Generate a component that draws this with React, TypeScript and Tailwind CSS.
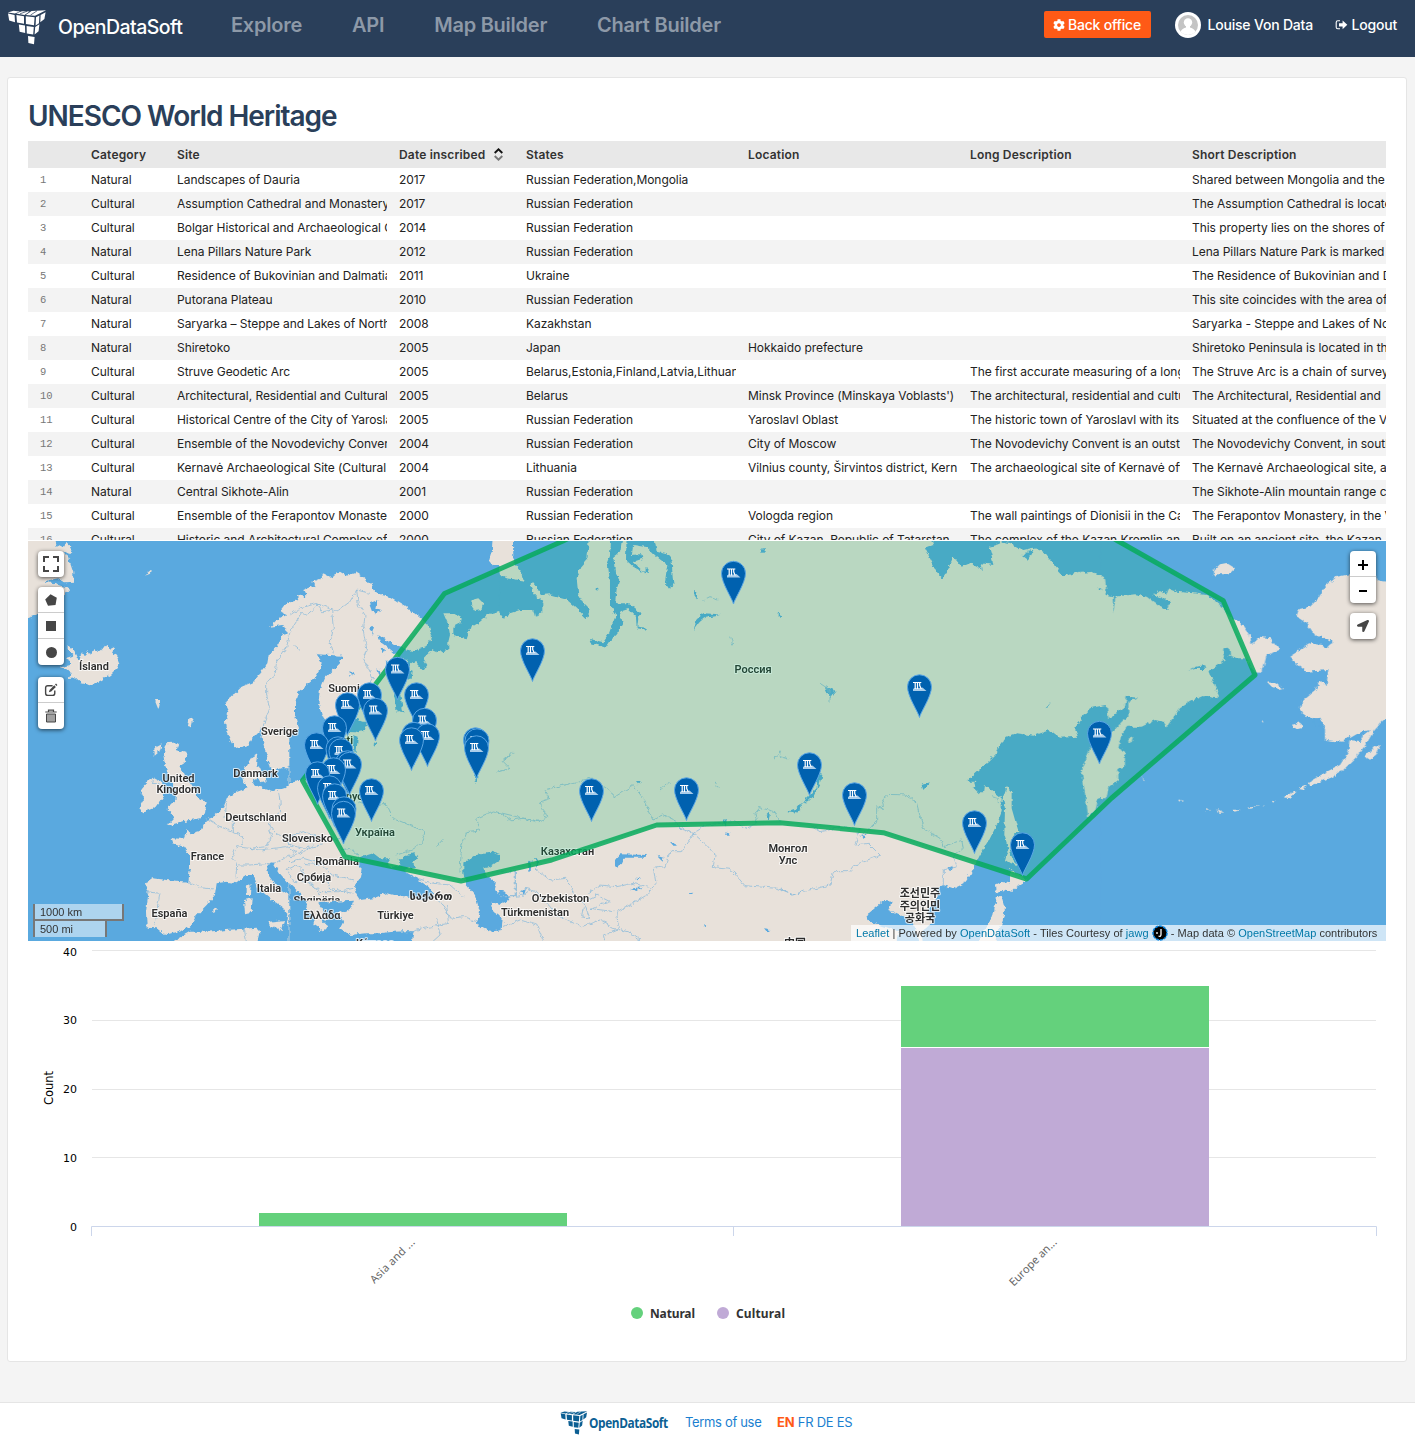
import { FaCog, FaLocationArrow } from "react-icons/fa";

const FACES = "M1 3.2 7.6 4.6 8 11.6 2.2 10z M9.4 4.8 17 5.8 17 13 10 11.9z M18.8 6 27.6 6.8 27 14.4 18.9 13.3z M29 6.8 32.4 5.2 32 12.4 28.6 14.6z M33.6 4.6 38.6 2.2 37.4 8.6 33.3 11.6z M11.8 13.6 18 14.6 18.2 21.6 12.6 20.4z M19.6 15 26.8 16 26.2 23.2 19.8 22.2z M28.2 16 32.4 13.4 31.6 20 27.6 23z M21 24.6 27.6 25.4 27 32.2 21.4 31z";
const TOPS = "M.8 2.4 6.5.8 13 1.4 7.8 3.4z M9.2 3.4 15 1.2 22.6 1.4 17.4 4.6z M18.8 4.6 24.6 1 39 .2 28 5.4z";

function Cubes({ color, w, h }: { color: string; w: number; h: number }) {
  return (
    <svg width={w} height={h} viewBox="0 0 40 33" preserveAspectRatio="none" fill={color} className="shrink-0">
      <path d={FACES} />
      <path d={TOPS} />
      <path d="M13 3.6 20 1.2M23.5 4.8 30 .8" stroke={color === "#fff" ? "#2a3f5a" : "#fff"} strokeWidth=".7" />
    </svg>
  );
}

function LogoutIcon() {
  return (
    <svg width="13" height="12" viewBox="0 0 13 12" className="shrink-0">
      <path d="M5 1.800H2.800Q1.200 1.800 1.200 3.400V8.200Q1.200 9.800 2.800 9.800H5" fill="none" stroke="#fff" strokeWidth="1.100" />
      <path d="M4 4.200H7.600V1.400L12.300 5.800 7.600 10.200V7.500H4z" fill="#fff" />
    </svg>
  );
}

function Header() {
  return (
    <header className="flex h-[57px] items-center bg-[#2a3f5a] pl-[7px] pr-[18px] text-white">
      <div className="flex items-center pb-[3px]">
        <Cubes color="#fff" w={40} h={35} />
        <span className="ml-[11px] mt-[1px] w-[173px] text-[19.5px] font-medium tracking-[-0.55px]">OpenDataSoft</span>
      </div>
      <nav className="mb-[7px] flex flex-1 gap-[50px] text-[20px] font-semibold tracking-[-0.25px] text-[#8d99a8]">
        <span>Explore</span>
        <span>API</span>
        <span>Map Builder</span>
        <span>Chart Builder</span>
      </nav>
      <div className="mb-[8px] flex items-center text-[14px] font-medium tracking-[-0.2px]">
        <span className="flex h-[27px] w-[107px] items-center justify-center gap-[3px] whitespace-nowrap rounded-[2px] bg-[#ff5a16]">
          <FaCog size={12} />
          Back office
        </span>
        <svg width="26" height="26" viewBox="0 0 26 26" className="ml-6">
          <circle cx="13" cy="13" r="13" fill="#fff" />
          <circle cx="13" cy="13" r="10" fill="#c4c4c4" />
          <circle cx="13" cy="10.500" r="4.200" fill="#fff" />
          <path d="M5.500 20Q6.500 16.500 11 15.500V13H15V15.500Q19.500 16.500 20.500 20Q13 26 5.500 20z" fill="#fff" />
        </svg>
        <span className="ml-[7px] w-[127px] whitespace-nowrap">Louise Von Data</span>
        <LogoutIcon />
        <span className="ml-1">Logout</span>
      </div>
    </header>
  );
}

const RF = "Russian Federation";
const ROWS: string[][] = [
  ["Natural", "Landscapes of Dauria", "2017", "Russian Federation,Mongolia", "", "", "Shared between Mongolia and the"],
  ["Cultural", "Assumption Cathedral and Monastery", "2017", RF, "", "", "The Assumption Cathedral is located"],
  ["Cultural", "Bolgar Historical and Archaeological Complex", "2014", RF, "", "", "This property lies on the shores of"],
  ["Natural", "Lena Pillars Nature Park", "2012", RF, "", "", "Lena Pillars Nature Park is marked"],
  ["Cultural", "Residence of Bukovinian and Dalmatian", "2011", "Ukraine", "", "", "The Residence of Bukovinian and Dalmatian"],
  ["Natural", "Putorana Plateau", "2010", RF, "", "", "This site coincides with the area of"],
  ["Natural", "Saryarka – Steppe and Lakes of Northern", "2008", "Kazakhstan", "", "", "Saryarka - Steppe and Lakes of Northern"],
  ["Natural", "Shiretoko", "2005", "Japan", "Hokkaido prefecture", "", "Shiretoko Peninsula is located in the"],
  ["Cultural", "Struve Geodetic Arc", "2005", "Belarus,Estonia,Finland,Latvia,Lithuania", "", "The first accurate measuring of a long", "The Struve Arc is a chain of survey"],
  ["Cultural", "Architectural, Residential and Cultural", "2005", "Belarus", "Minsk Province (Minskaya Voblasts')", "The architectural, residential and cultural", "The Architectural, Residential and"],
  ["Cultural", "Historical Centre of the City of Yaroslavl", "2005", RF, "Yaroslavl Oblast", "The historic town of Yaroslavl with its", "Situated at the confluence of the Volga"],
  ["Cultural", "Ensemble of the Novodevichy Convent", "2004", RF, "City of Moscow", "The Novodevichy Convent is an outstanding", "The Novodevichy Convent, in south"],
  ["Cultural", "Kernavė Archaeological Site (Cultural", "2004", "Lithuania", "Vilnius county, Širvintos district, Kern", "The archaeological site of Kernavė offers", "The Kernavė Archaeological site, about"],
  ["Natural", "Central Sikhote-Alin", "2001", RF, "", "", "The Sikhote-Alin mountain range contains"],
  ["Cultural", "Ensemble of the Ferapontov Monaste", "2000", RF, "Vologda region", "The wall paintings of Dionisii in the Cathedral", "The Ferapontov Monastery, in the Vologda"],
  ["Cultural", "Historic and Architectural Complex of", "2000", RF, "City of Kazan, Republic of Tatarstan", "The complex of the Kazan Kremlin and", "Built on an ancient site, the Kazan"],
];
const COLS = "grid grid-cols-[51px_74px_210px_115px_210px_210px_210px_210px] gap-x-3 whitespace-nowrap";

function Table() {
  return (
    <div className="h-[399px] overflow-hidden text-[12px] tracking-[-0.05px] text-[#222]">
      <div className={`${COLS} h-[27px] items-center bg-[#e8e8e8] font-semibold tracking-[0.18px] text-[#333]`}>
        <span />
        <span>Category</span>
        <span>Site</span>
        <span className="flex items-center gap-[9px]">
          Date inscribed
          <svg width="9" height="13" viewBox="0 0 9 13" fill="none" strokeWidth="1.900">
            <path d="M.7 5 4.500 1.300 8.300 5" stroke="#111" />
            <path d="M.7 8 4.500 11.700 8.300 8" stroke="#777" />
          </svg>
        </span>
        <span>States</span>
        <span>Location</span>
        <span>Long Description</span>
        <span>Short Description</span>
      </div>
      {ROWS.map((r, i) => (
        <div key={i} className={`${COLS} h-6 items-center odd:bg-[#f3f3f3]`}>
          <span className="pl-[12px] pt-px font-['Liberation_Mono'] text-[10.5px] text-[#777]">{i + 1}</span>
          {r.map((c, j) => (
            <span key={j} className="overflow-hidden">{c}</span>
          ))}
        </div>
      ))}
    </div>
  );
}

const LAND = "#e8e1da";
const SEA = "#5aa9df";

// Coastlines are stored at three units per pixel, in strips that run west to east.
const LAND_WEST = [
  "-20,-10 100,-10 110,30 130,40 140,20 158,50 150,58 130,48 150,80 160,110 160,140 135,142 115,130 90,135 75,140 100,145 150,162 135,180 100,185 70,200 60,235 24,250 -20,255",
  "122,398 150,390 150,378 135,370 160,362 140,345 140,332 158,338 170,360 178,378 186,348 195,365 205,345 213,360 222,342 235,352 245,345 258,328 268,342 282,335 278,350 292,368 298,385 290,400 270,420 240,438 210,451 185,445 170,430 145,432 155,415 140,400",
  "900,155 880,152 850,165 860,185 830,180 835,195 800,205 780,230 800,240 770,255 750,275 790,270 800,290 785,310 770,335 750,355 745,385 725,410 700,440 665,455 650,470 625,490 615,510 625,530 615,560 620,590 635,625 655,640 685,630 700,605 715,590 724,580 725,610 740,660 750,700 760,715 780,700 805,700 812,660 818,625 845,600 852,575 840,555 825,540 825,500 835,470 860,450 885,430 905,405",
  "440,625 478,622 470,645 500,655 495,680 480,690 495,720 520,760 540,795 560,800 555,835 540,850 490,858 470,865 440,872 465,845 440,820 465,800 470,770 445,720 435,690 430,660",
  "365,760 395,725 430,745 428,790 410,815 370,832 358,820 372,795 362,775",
  "675,700 695,665 712,655 708,690 725,700 700,740 700,750 735,760 760,768 800,755 850,735 912,728 912,1155 890,1170 870,1150 862,1110 850,1090 810,1050 775,1010 760,985 740,990 745,1020 770,1055 815,1085 848,1112 818,1118 828,1140 815,1165 800,1165 805,1140 790,1120 750,1090 715,1060 700,1020 680,1020 650,1045 620,1040 590,1045 585,1080 560,1110 530,1140 510,1175 470,1190 435,1200 410,1180 380,1178 378,1130 385,1080 375,1048 400,1030 440,1035 505,1040 510,1000 510,965 490,935 460,925 455,910 490,912 500,885 512,898 540,890 555,860 570,850 610,820 620,790 640,775 680,760 670,730",
  "430,1235 510,1190 560,1190 620,1185 710,1178 718,1195 708,1235",
  "680,1055 692,1048 690,1080 680,1080", "672,1095 698,1090 695,1130 675,1135", "745,1160 795,1155 785,1188 750,1172",
  "572,1132 585,1118 592,1126", "375,122 395,106 394,115", "405,495 422,495 416,522", "503,578 508,550 518,548 512,575", "403,640 425,628 418,650 404,662",
  "840,665 850,645 858,655 845,672", "808,700 820,665 818,690", "712,722 735,718 740,740 722,745", "860,568 878,560 878,575",
];
const LAND_B = [
  "-4,240 10,215 40,195 50,170 80,160 70,140 95,130 100,115 120,125 150,110 170,122 200,112 245,145 250,165 275,180 300,185 340,210 380,240 415,270 426,300 410,335 370,348 320,335 265,300 270,320 300,342 330,368 355,372 352,395 375,380 400,408 412,390 400,370 425,345 440,352 475,345 475,320 480,300 475,270 460,235 490,235 515,250 510,265 490,275 490,300 530,310 540,280 570,260 600,235 640,225 640,1235 -4,1235",
];
const ISLANDS_B = ["610,-10 605,50 598,75 610,90 625,90 630,120 650,130 700,137 700,120 675,90 668,60 668,-10", "545,195 565,190 580,205 575,225 555,228 543,210", "722,145 740,155 752,190 728,170"];
const WATER_B = [
  "-2,600 25,590 20,560 15,540 15,500 25,470 50,450 75,430 90,405 95,380 80,358 155,362 150,385 125,410 105,430 90,465 85,500 95,540 110,560 200,552 235,570 200,592 140,590 110,600 120,640 90,650 80,630 70,680 60,710 35,735 -2,745",
  "200,1080 195,1050 210,1030 215,1000 200,990 215,965 250,955 270,970 300,970 290,985 310,1000 335,990 325,975 350,960 370,955 385,965 370,985 375,1000 350,1000 345,1010 380,1030 420,1060 432,1085 400,1095 370,1090 330,1085 290,1075 250,1090 210,1095",
  "520,1015 520,985 545,970 570,955 600,950 630,960 630,975 600,995 580,1000 590,1020 620,1045 615,1065 640,1090 630,1110 605,1100 610,1130 638,1150 635,1185 600,1190 570,1175 560,1160 570,1130 555,1080 530,1050",
  "-2,1045 30,1075 50,1095 50,1120 75,1150 70,1170 100,1190 110,1170 90,1150 115,1155 100,1125 85,1105 130,1100 195,1097 185,1120 145,1135 160,1160 150,1180 180,1200 230,1195 270,1195 310,1190 370,1188 365,1235 -2,1235",
  "310,460 330,470 340,535 320,530", "340,400 368,410 365,435 345,425", "185,560 230,560 225,585 185,590", "187,600 203,605 200,650 190,650",
  "240,205 262,195 256,218 276,226 252,238", "178,408 196,418 182,422", "238,280 252,275 246,300", "275,340 288,345 280,358", "248,625 258,618 258,635", "552,720 562,720 560,745", "262,400 275,410 270,425", "290,375 300,385 296,400",
];
const WATER_C = [
  "0,100 40,60 38,-10 268,-10 262,70 240,95 230,130 235,180 255,210 270,225 260,250 225,215 195,190 150,178 125,180 100,145 90,150 105,180 130,200 130,230 105,245 100,225 60,225 30,235 10,250 -2,232",
  "335,-10 372,-10 365,45 340,65 345,110 358,135 350,160 345,205 380,205 405,215 425,240 415,250 412,275 440,278 440,284 410,280 408,245 385,222 360,230 368,265 350,295 330,320 318,338 275,325 270,312 310,322 325,300 340,260 348,240 330,205 330,140 325,100 318,90 330,60",
  "380,-10 460,-10 470,50 500,58 515,75 518,130 521,150 508,160 495,140 502,90 470,65 440,36 400,30 395,60 420,58 425,72 400,80 430,110 445,95 440,118 400,95 378,75",
  "784,40 797,40 797,50 784,50", "582,165 592,170 590,190 584,182", "582,285 590,250 610,235 660,238 618,245 600,260", "290,160 296,164 290,167",
  "345,975 360,958 440,960 440,968 370,968 355,1000 345,990", "-4,1065 15,1070 28,1095 5,1104", "85,985 95,975 92,1010 85,1010", "105,965 115,980 110,1005", "390,1062 425,1056 410,1068", "470,962 490,968 488,980", "508,918 535,932 520,932", "405,1028 425,1030 410,1033", "565,1072 580,1070 572,1078", "675,892 692,896 680,900", "860,830 885,825 905,800 905,820 885,835", "792,1180 808,1182 802,1192", "800,840 810,830 806,860", "408,738 422,738 416,748", "838,238 844,242 838,245", "612,1168 625,1172 614,1174", "668,855 680,852 678,875", "65,1070 78,1062 72,1080",
];
const WATER_D = [
  "435,40 460,30 445,-10 670,-10 655,28 628,35 635,60 640,90 605,85 608,105 570,85 545,95 520,65 505,100 488,130 470,110 460,90",
  "665,-10 962,-10 962,115 915,108 880,115 850,125 830,100 810,75 790,50 760,38 730,45 690,24 665,20",
  "725,60 745,58 735,48 760,45 745,75",
  "560,740 580,720 625,680 650,655 655,640 680,605 710,595 760,602 810,585 840,608 895,605 885,580 910,545 930,520 962,510 962,1240 430,1240 425,1190 460,1160 440,1130 470,1090 470,1060 490,1050 520,1060 550,1045 570,1020 600,960 625,920 650,870 665,830 665,790 640,770 615,750 612,775 600,775 580,755 590,740",
  "260,1140 310,1098 335,1100 325,1125 345,1135 400,1160 420,1240 340,1240 360,1190 300,1170 262,1158",
  "22,830 55,822 80,790 110,760 112,715 125,715 120,745 100,785 65,810 45,835", "425,750 450,742 430,765", "500,998 518,992 510,1012", "135,455 150,460 168,468 150,490", "797,520 814,500 802,518", "245,905 260,895 255,910", "-4,236 4,240 -4,246",
];
const LAND_D = [
  "680,755 695,770 695,820 715,890 700,900 690,960 700,975 712,990 690,985 675,975 685,940 673,900 675,820 668,790",
  "645,1050 665,1040 690,1045 690,998 715,1020 745,1035 710,1055 695,1070 665,1065 648,1078",
  "650,1090 665,1085 675,1120 670,1150 655,1190 640,1235 590,1235 620,1170 640,1140",
];
const LAND_E = [
  "-10,115 40,110 75,130 80,180 105,185 165,178 200,185 220,200 250,222 265,222 270,200 240,185 220,178 240,168 260,180 265,160 290,170 340,175 380,180 420,210 450,245 490,270 510,300 515,330 540,305 570,310 598,345 560,360 550,400 530,418 495,370 475,370 450,362 448,338 430,340 430,360 435,375 385,410 400,440 415,480 405,490 375,480 330,500 300,520 260,575 250,560 225,555 185,575 145,575 125,600 115,640 135,650 135,695 115,700 115,735 85,760 80,790 55,790 45,830 25,845 10,740 5,710 20,670 30,640 65,620 100,590 125,560 145,545 145,500 172,488 140,485 135,515 85,550 80,510 50,515 30,520 0,550 -10,560",
  "940,145 895,140 885,115 810,118 770,125 735,155 715,190 690,215 658,222 650,245 680,265 705,300 755,320 740,340 725,330 690,325 660,345 628,365 655,390 680,410 745,405 740,450 720,440 705,465 675,490 660,520 680,550 720,545 735,580 735,615 785,620 810,600 805,650 780,690 740,710 685,742 690,752 750,728 790,705 830,665 860,625 880,590 905,560 940,540",
  "402,105 420,88 440,84 465,100 450,115 420,115 402,122", "562,442 590,445 612,462 600,465 575,455", "638,570 655,562 670,575 650,580", "855,665 885,630 902,632 885,665 865,675",
  "655,762 680,750 672,765", "612,786 640,770 650,770 625,790", "455,824 485,824 460,830", "505,818 540,812 510,822", "182,722 190,740 194,742", "295,793 310,798 302,800", "542,555 552,562 545,562", "548,812 556,812 552,816", "575,802 586,798 580,806", "145,612 160,602 155,618 145,622", "380,822 390,826 382,828", "412,822 430,832 418,834",
];
const WATER_E = ["325,408 350,395 375,390 378,402 345,402", "800,615 840,592 870,585 850,600 842,618", "700,545 705,570 722,572 715,550", "54,160 66,160 66,166 54,166", "98,185 106,188 100,235", "705,312 730,305 760,322 740,335"];

const LINES: [number, string[]][] = [
  [0, ["900,205 860,240 845,235 810,290 800,335 770,380 765,420 740,440 740,480 748,520 735,560 725,580", "820,330 840,346", "775,768 780,800 782,830 745,860 755,880 790,910 850,890 905,905", "745,860 755,905 740,935 690,940 650,935 635,970 650,985 648,1030", "560,850 600,875 640,890 668,905 665,930", "620,800 615,850 640,860 640,890", "505,1042 540,1058 580,1062", "380,1070 420,1075 410,1130 405,1170", "690,940 720,945 760,940 800,935 830,950 800,965 770,985", "750,985 690,990 655,990", "800,1005 830,990 850,1000 848,1040 820,1040 805,1010", "850,985 905,990", "672,1178 680,1222", "395,730 405,745 420,748", "790,910 810,930 850,940 905,930", "850,1040 880,1050 900,1080"]],
  [810, ["0,240 30,220 80,205 100,230 125,225 130,280 120,320 130,355", "80,205 140,230 180,200 200,165 240,175", "200,165 205,210 225,240 220,290 230,340 220,370 250,430 220,480", "205,800 250,812 290,808 310,850 370,875 405,890 395,925 365,945 320,960", "0,900 40,915 80,900 110,920 150,910", "0,980 40,970 90,985 130,1020 190,1035", "80,900 60,940 20,960 0,965", "150,945 180,940 210,965", "110,1030 120,1060 190,1075", "30,1000 60,1040 90,1070 140,1070 190,1060", "510,1010 515,930 530,890 570,885 560,850 610,828 680,845 750,860", "620,712 660,700 640,680 665,650", "440,935 460,912", "380,1030 430,1045 480,1050 520,1085", "430,1085 460,1110 480,1150 520,1145 560,1160", "470,1110 475,1165 400,1180 350,1195", "440,1150 450,1200 430,1218", "676,1005 676,1085 640,1085", "676,1085 700,1080 720,1065", "250,540 240,500 260,460"]],
  [1440, ["0,835 30,855 70,850 110,860 140,850 120,800 150,790 135,765 270,730 320,760 345,785 370,770 400,752 430,790 460,855 490,840 530,860 540,880 580,895 620,870 700,860 740,880 770,865 765,835 780,818 825,830 840,865", "580,895 545,950 510,950 495,995 460,1000 468,1045 440,1080 400,1105 350,1130 355,1180 310,1200 315,1220", "580,895 620,930 645,960 640,995 690,1000 735,1052 830,1060 880,1080 910,1070", "0,1010 46,1010 46,1085 0,1085", "46,1085 75,1060 110,1070 150,1115 170,1140 215,1160 245,1175 300,1155 340,1180 385,1190 420,1215", "105,1000 150,1035 200,1030 220,1075", "265,1075 300,1050 350,1055 400,1045 460,1060", "250,1120 245,1145 270,1150 250,1100 290,1080 330,1100 270,1120 340,1130", "10,1175 60,1155 110,1170 130,1218", "10,675 40,655", "610,198 630,188 655,195", "480,765 510,740", "645,740 655,758", "820,675 845,645 840,665 865,672", "692,305 698,328"]],
  [2280, ["0,1062 40,1080 75,1068 150,1050 160,1010 210,1010 225,990 300,960 265,925 225,930 240,880 190,875 120,890 95,875", "240,905 290,860 290,815 312,820 305,795 325,778 380,780 410,805 430,880 480,910 490,935 545,915 550,940 520,965 530,995 490,1005 490,1055", "635,785 655,790 655,805", "120,445 150,465 150,500"]],
];

const PINS: [number, number][] = [
  [733.5, 561], [532.5, 638.5], [397.5, 657], [416.5, 682.5], [369.5, 682.5], [347.5, 692.5], [375.5, 698], [424.5, 708], [334.5, 715.5], [414, 722], [427.5, 723.5], [411.5, 727.5], [475.5, 727.5], [477, 728.5], [476.5, 735.5], [316.5, 732.5], [338, 736.5], [341, 738.5], [347.5, 750.5], [349.5, 752], [333.5, 757.5], [317.5, 761.5], [329.5, 775.5], [334.5, 783.5], [371.5, 778.5], [344, 796.5], [343.5, 801], [591.5, 778.5], [686.5, 777.5], [919.5, 674.5], [809.5, 752.5], [854.5, 782.5], [974.5, 810.5], [1022.5, 832.5], [1099.5, 721],
];

const LABELS: [number, number, string][] = [
  [94, 670, "Ísland"], [279.5, 734.5, "Sverige"], [255.5, 777, "Danmark"], [178.5, 781.5, "United"], [178.5, 792.5, "Kingdom"], [256, 821, "Deutschland"], [207.5, 859.5, "France"], [269, 891.5, "Italia"], [169.5, 916.5, "España"], [344, 691.5, "Suomi"], [307.5, 841.5, "Slovensko"], [337, 865, "România"], [314, 880.5, "Србија"], [322, 919, "Ελλάδα"], [395.5, 919, "Türkiye"], [375, 835.5, "Україна"], [345, 799.5, "Беларусь"], [341, 744, "Eesti"], [567.5, 854.5, "Казахстан"], [560.5, 901.5, "O'zbekiston"], [535, 916, "Türkmenistan"], [753, 673, "Россия"], [788, 851.5, "Монгол"], [788, 864, "Улс"], [431, 899.5, "საქართ"], [920, 896.5, "조선민주"], [920, 909.5, "주의인민"], [920, 922, "공화국"],
];

function Shapes({ list, x, fill }: { list: string[]; x: number; fill: string }) {
  return (
    <g transform={`translate(${x} 0)`} fill={fill}>
      {list.map((p) => <polygon key={p} points={p} />)}
    </g>
  );
}

function Pin({ x, y }: { x: number; y: number }) {
  return (
    <g transform={`translate(${x} ${y})`}>
      <path d="M0 43C-1 38-12 22-12 12.300A12 12 0 0 1 12 12.300C12 22 1 38 0 43z" fill="#0061af" stroke="#5aa6e4" strokeWidth="1" />
      <path d="M-6.500 14.500-5 13.500H1.500L3 13 7 16.500H-6.500z" fill="#a9cdea" />
      <path d="M-6.500 8H1.800M-4.300 8V14.500M-2 8V14.500M.2 8V11L1.800 14.500" stroke="#fff" strokeWidth="1.200" fill="none" />
    </g>
  );
}

function WorldMap() {
  return (
    <svg width="1358" height="400" viewBox="28 541 1358 400" className="block">
      <defs>
        <filter id="coast" x="-2%" y="-2%" width="104%" height="104%" colorInterpolationFilters="sRGB">
          <feTurbulence type="fractalNoise" baseFrequency="0.2" numOctaves="3" seed="7" />
          <feDisplacementMap in="SourceGraphic" scale="5" xChannelSelector="R" yChannelSelector="G" />
        </filter>
        <clipPath id="tile"><rect x="280" y="890" width="70" height="10.500" /></clipPath>
      </defs>
      <rect x="28" y="541" width="1358" height="400" fill={SEA} />
      <g filter="url(#coast)">
        <g transform="translate(20 535) scale(.33333)">
          <rect x="1440" y="-10" width="1745" height="1250" fill={LAND} />
          <Shapes list={LAND_WEST} x={0} fill={LAND} />
          <Shapes list={LAND_B} x={810} fill={LAND} />
          <Shapes list={WATER_B} x={810} fill={SEA} />
          <Shapes list={WATER_C} x={1440} fill={SEA} />
          <Shapes list={ISLANDS_B} x={810} fill={LAND} />
          <Shapes list={WATER_D} x={2280} fill={SEA} />
          <Shapes list={LAND_D} x={2280} fill={LAND} />
          <Shapes list={LAND_E} x={3180} fill={LAND} />
          <Shapes list={WATER_E} x={3180} fill={SEA} />
          {LINES.map(([x, ls]) => (
            <g key={x} transform={`translate(${x} 0)`} fill="none" stroke="#8fbcda" strokeWidth="2.400">
              {ls.map((p) => <polyline key={p} points={p} />)}
            </g>
          ))}
        </g>
      </g>
      <g fontFamily="Roboto, 'Noto Sans CJK KR', 'DejaVu Sans', sans-serif" fontSize="11" fontWeight="600" textAnchor="middle" fill="#2d2d2d" stroke="#fff" strokeWidth="2" strokeOpacity=".75" strokeLinejoin="round" style={{ paintOrder: "stroke" }}>
        {LABELS.map(([x, y, t]) => <text key={t} x={x} y={y}>{t}</text>)}
        <g clipPath="url(#tile)"><text x="317" y="904">Shqipëria</text></g>
        <text x="375" y="947">Κύπρος</text>
        <text x="795" y="947">中国</text>
      </g>
      <path d="M563 541 444.500 593.500 302.500 780.500 345 856.700 461 881 551.700 860 656.700 825 780 822.700 883.300 832.700 1026.700 879 1111.700 798 1255 675 1223.300 600.700 1118 541 1080 518 610 518z" fill="#02ad5d" fillOpacity=".2" stroke="#06aa5c" strokeOpacity=".85" strokeWidth="5" strokeLinejoin="round" />
      {PINS.map(([x, y]) => <Pin key={`${x} ${y}`} x={x} y={y} />)}
    </svg>
  );
}

const BOX = "w-[26px] divide-y divide-[#ccc] rounded-[4px] bg-white shadow-[0_1px_4px_rgba(0,0,0,0.65)]";
const CELL = "flex h-[26px] items-center justify-center text-[#464646]";

function MapPanel() {
  return (
    <div className="relative mt-px h-[400px] overflow-hidden">
      <WorldMap />
      <div className="absolute left-[10px] top-[10px] flex flex-col">
        <div className={BOX}>
          <div className={CELL}>
            <svg width="16" height="16" viewBox="0 0 16 16" fill="none" stroke="#464646" strokeWidth="2"><path d="M1 6V1H6M10 1H15V6M15 10V15H10M6 15H1V10" /></svg>
          </div>
        </div>
        <div className={`${BOX} mt-[10px]`}>
          <div className={CELL}><svg width="12" height="12" viewBox="0 0 12 12" fill="#464646"><path d="M5.500.2 11.800 3.800 10.500 11 3 11.800.2 5.500z" /></svg></div>
          <div className={CELL}><span className="h-[10px] w-[10px] bg-[#464646]" /></div>
          <div className={CELL}><span className="h-[11px] w-[11px] rounded-full bg-[#464646]" /></div>
        </div>
        <div className={`${BOX} mt-[12px]`}>
          <div className={CELL}>
            <svg width="14" height="14" viewBox="0 0 13 13" fill="none" stroke="#464646" strokeWidth="1.300">
              <path d="M8 2.500H3.500Q1.500 2.500 1.500 4.500V9.500Q1.500 11.500 3.500 11.500H8Q10 11.500 10 9.500V7" />
              <path d="M4.500 8.700 5.200 6.500 9.500 2.200 11 3.700 6.700 8z" fill="#464646" stroke="none" /><path d="M10.700 1 12 2.300" />
            </svg>
          </div>
          <div className={CELL}>
            <svg width="12" height="14" viewBox="0 0 12 14"><path d="M1.500 5H10.500V13H1.500z" fill="#a0a0a0" stroke="#464646" /><path d="M.3 3H11.700M3.500 3V1.200H8.500V3" fill="none" stroke="#464646" strokeWidth="1.200" /></svg>
          </div>
        </div>
      </div>
      <div className="absolute right-[10px] top-[10px] flex flex-col">
        <div className={BOX}>
          <div className={`${CELL} pt-[2px]`}><svg width="10" height="10" viewBox="0 0 10 10"><path d="M0 5H10M5 0V10" stroke="#000" strokeWidth="2" /></svg></div>
          <div className={`${CELL} pt-[2px]`}><span className="h-[2px] w-2 bg-black" /></div>
        </div>
        <div className={`${BOX} mt-[10px]`}><div className={CELL}><FaLocationArrow size={12} /></div></div>
      </div>
      <div className="absolute bottom-[4px] left-[5px] font-['Liberation_Sans'] text-[11px] leading-[14px] text-[#333]">
        <div className="h-[17px] w-[91px] border-2 border-t-0 border-[#777] bg-white/50 pl-[5px] pt-px">1000 km</div>
        <div className="h-[16px] w-[74px] border-2 border-y-0 border-[#777] bg-white/50 pl-[5px] pt-px">500 mi</div>
      </div>
      <div className="absolute bottom-0 right-0 h-4 w-[535px] whitespace-nowrap bg-white/70 pl-[5px] font-['Liberation_Sans'] text-[11px] leading-4 tracking-[0.04px] text-[#333]">
        <span className="text-[#0078a8]">Leaflet</span> | Powered by <span className="text-[#0078a8]">OpenDataSoft</span> - Tiles Courtesy of <span className="text-[#0078a8]">jawg</span>{" "}
        <svg width="16" height="16" viewBox="0 0 16 16" className="inline-block align-top"><circle cx="8" cy="8" r="7" fill="#000" stroke="#0a84e0" strokeWidth="1.500" strokeDasharray="3 1" /><path d="M9 4V9.500Q9 12 6.500 11M5 7V9" stroke="#fff" strokeWidth="1.300" fill="none" /></svg>
        {" "}- Map data © <span className="text-[#0078a8]">OpenStreetMap</span> contributors
      </div>
    </div>
  );
}

function Chart() {
  return (
    <svg width="1358" height="400" viewBox="28 941 1358 400" className="block" fontFamily="'DejaVu Sans', sans-serif" fontSize="11">
      {[950.5, 1020.5, 1089.5, 1157.5].map((y) => <path key={y} d={`M92 ${y}H1376`} stroke="#e6e6e6" />)}
      {[["40", 956], ["30", 1024], ["20", 1093], ["10", 1162], ["0", 1231]].map(([t, y]) => <text key={t} x="77" y={y} textAnchor="end">{t}</text>)}
      <text transform="translate(53 1088) rotate(-90)" textAnchor="middle" fontSize="11.500">Count</text>
      <path d="M259 1213H567V1226H259zM901 986H1209V1047H901z" fill="#64d17c" />
      <path d="M901 1048H1209V1226H901z" fill="#c0aad6" />
      <path d="M91.500 1236V1226.500H1376.500V1236M733.500 1226V1236" stroke="#ccd6eb" fill="none" />
      <g fill="#666" textAnchor="end" fontFamily="'Noto Sans', sans-serif">
        <text transform="translate(415.500 1243) rotate(-45)" textLength="58">Asia and ...</text>
        <text transform="translate(1057.500 1243) rotate(-45)" textLength="62">Europe an...</text>
      </g>
      <circle cx="637" cy="1313" r="6" fill="#64d17c" />
      <circle cx="723" cy="1313" r="6" fill="#c0aad6" />
      <g fontFamily="'Noto Sans', sans-serif" fontSize="12" fontWeight="700" fill="#333">
        <text x="650" y="1318" textLength="45">Natural</text>
        <text x="736" y="1318" textLength="49">Cultural</text>
      </g>
    </svg>
  );
}

export default function App() {
  return (
    <div className="flex h-[1438px] w-[1415px] flex-col overflow-hidden bg-[#f4f4f4] font-['Inter']">
      <Header />
      <main className="ml-[7px] mt-5 h-[1285px] w-[1400px] rounded-[3px] border border-[#e5e5e5] bg-white px-5">
        <h1 className="h-[63px] whitespace-nowrap pt-[20px] text-[28px] font-semibold leading-9 tracking-[-1.03px] text-[#2a3f5a]">UNESCO World Heritage</h1>
        <Table />
        <MapPanel />
        <Chart />
      </main>
      <footer className="mt-10 flex h-9 flex-1 items-center border-t border-[#e5e5e5] bg-white pl-[560px] pt-1 text-[13px] text-[#1a7fd0]">
        <Cubes color="#0c5f93" w={28} h={24} />
        <span className="ml-px w-[96px] font-['Open_Sans'] text-[15px] font-bold tracking-[-0.5px] text-[#0c5f93]">
          <span className="inline-block origin-left scale-x-[0.79]">OpenDataSoft</span>
        </span>
        <span className="w-[92px] whitespace-nowrap tracking-[-0.33px]">Terms of use</span>
        <span className="whitespace-nowrap tracking-[-0.25px]"><b className="text-[#ff5a16]">EN</b> FR DE ES</span>
      </footer>
    </div>
  );
}
